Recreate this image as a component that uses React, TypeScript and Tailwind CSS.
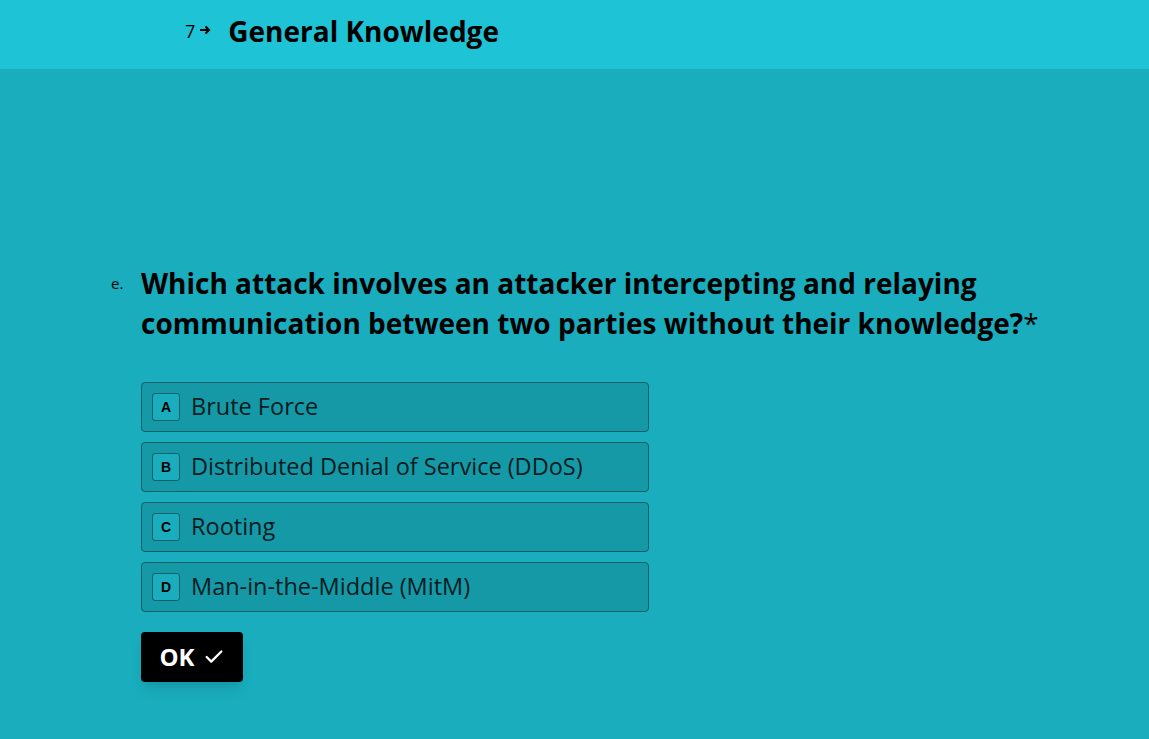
import { Check } from 'lucide-react';

const options = [
  { key: 'A', label: 'Brute Force' },
  { key: 'B', label: 'Distributed Denial of Service (DDoS)' },
  { key: 'C', label: 'Rooting' },
  { key: 'D', label: 'Man-in-the-Middle (MitM)' },
];

export default function App() {
  return (
    <div className="min-h-screen w-full bg-[#19adbd] text-black font-['Open_Sans',sans-serif]">
      <header className="h-[69px] bg-[#1ec4d6] flex items-center pl-[185px]">
        <span className="text-[18px] leading-none mt-[-8px]">7</span>
        <svg width="13" height="12" viewBox="0 0 13 12" className="ml-[4px] mt-[-10px]">
          <path d="M1 6h9M6.5 2.5 10 6l-3.5 3.5" stroke="black" strokeWidth="2" fill="none" />
        </svg>
        <h1 className="ml-[16px] text-[28px] font-bold leading-none mt-[-8px]">General Knowledge</h1>
      </header>

      <main className="pl-[111px] pt-[194px]">
        <div className="flex">
          <span className="w-[30px] text-[15px] pt-[9px]">e.</span>
          <div>
            <h2 className="text-[28px] font-bold leading-[40px] max-w-[910px]">
              Which attack involves an attacker intercepting and relaying communication between two parties without their knowledge?<span className="font-normal">*</span>
            </h2>
            <div className="mt-[39px] flex flex-col gap-[10px] w-[508px]">
              {options.map((o) => (
                <div
                  key={o.key}
                  className="h-[50px] flex items-center rounded-[4px] border border-[#0e5f69] bg-[#1699a7] px-[10px]"
                >
                  <span className="w-[28px] h-[28px] flex items-center justify-center rounded-[3px] border border-[#0e5f69] bg-[#1aadbd] text-[14px] font-bold font-['Liberation_Sans',sans-serif]">
                    {o.key}
                  </span>
                  <span className="ml-[11px] text-[23.5px] text-[#021c1f]">{o.label}</span>
                </div>
              ))}
            </div>
            <button className="mt-[20px] h-[50px] w-[102px] rounded-[4px] bg-black text-white flex items-center justify-center gap-[8px] shadow-lg">
              <span className="text-[24px] font-bold">OK</span>
              <Check className="w-[22px] h-[22px]" strokeWidth={2.5} />
            </button>
          </div>
        </div>
      </main>
    </div>
  );
}
